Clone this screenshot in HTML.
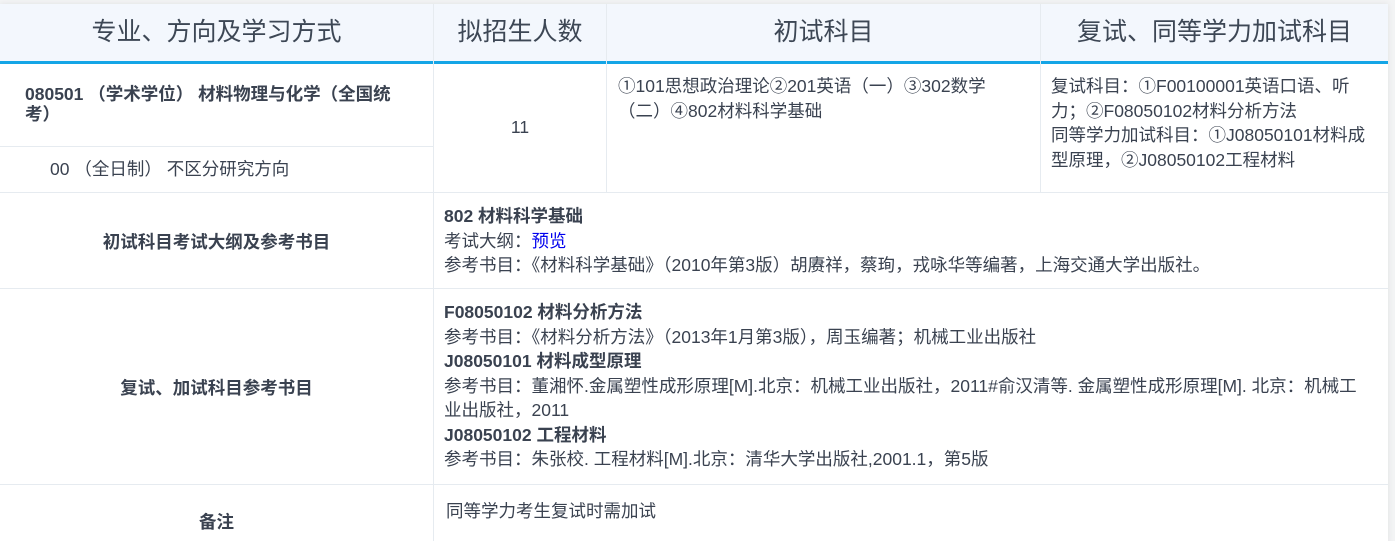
<!DOCTYPE html>
<html><head><meta charset="utf-8"><style>
*{margin:0;padding:0;box-sizing:border-box}
html,body{width:1395px;height:541px;overflow:hidden}
body{background:#f3f4f5;font-family:"Liberation Sans","Noto Sans CJK SC",sans-serif;color:#3a4250;position:relative}
.t{position:absolute;left:0;top:4px;width:1388px;height:540px;background:#fff;box-shadow:0 0 6px rgba(0,0,0,.08)}
.a{position:absolute}
.hd{position:absolute;top:0;height:57px;background:#f3f7fd;font-size:25px;line-height:57px;text-align:center;color:#3d4755}
.vl{position:absolute;width:1px;background:#e6ebf0}
.hl{position:absolute;height:1px;background:#e6ebf0}
.txt{font-size:17.5px;line-height:24.5px}
b{font-weight:bold}
</style></head><body>
<div class="t">
<div class="hd" style="left:0;width:433px">专业、方向及学习方式</div>
<div class="hd" style="left:434px;width:172px">拟招生人数</div>
<div class="hd" style="left:607px;width:433px">初试科目</div>
<div class="hd" style="left:1041px;width:347px">复试、同等学力加试科目</div>
<div class="a" style="left:0;top:57px;width:1388px;height:3px;background:#14a5e6"></div>
<div class="vl" style="left:433px;top:0;height:560px"></div>
<div class="vl" style="left:606px;top:0;height:188px"></div>
<div class="vl" style="left:1040px;top:0;height:188px"></div>
<div class="hl" style="left:0;top:142px;width:433px"></div>
<div class="hl" style="left:0;top:188px;width:1388px"></div>
<div class="hl" style="left:0;top:284px;width:1388px"></div>
<div class="hl" style="left:0;top:480px;width:1388px"></div>
<div class="a txt" style="left:25px;top:80px;width:385px;line-height:20px;font-weight:bold;font-size:17.5px">080501 （学术学位） 材料物理与化学（全国统考）</div>
<div class="a txt" style="left:50px;top:153px">00 （全日制） 不区分研究方向</div>
<div class="a txt" style="left:434px;top:111px;width:172px;text-align:center">11</div>
<div class="a txt" style="left:618px;top:70px;width:400px">①101思想政治理论②201英语（一）③302数学（二）④802材料科学基础</div>
<div class="a txt" style="left:1051px;top:70px;width:325px">复试科目：①F00100001英语口语、听力；②F08050102材料分析方法<br>同等学力加试科目：①J08050101材料成型原理，②J08050102工程材料</div>
<div class="a txt" style="left:0;top:226px;width:433px;text-align:center;font-weight:bold">初试科目考试大纲及参考书目</div>
<div class="a txt" style="left:444px;top:200px"><b>802 材料科学基础</b><br>考试大纲：<span style="color:#0000ee">预览</span><br>参考书目：《材料科学基础》（2010年第3版）胡赓祥，蔡珣，戎咏华等编著，上海交通大学出版社。</div>
<div class="a txt" style="left:0;top:372px;width:433px;text-align:center;font-weight:bold">复试、加试科目参考书目</div>
<div class="a txt" style="left:444px;top:296px;width:930px"><b>F08050102 材料分析方法</b><br>参考书目：《材料分析方法》（2013年1月第3版），周玉编著；机械工业出版社<br><b>J08050101 材料成型原理</b><br>参考书目：董湘怀.金属塑性成形原理[M].北京：机械工业出版社，2011#俞汉清等. 金属塑性成形原理[M]. 北京：机械工业出版社，2011<br><b>J08050102 工程材料</b><br>参考书目：朱张校. 工程材料[M].北京：清华大学出版社,2001.1，第5版</div>
<div class="a txt" style="left:0;top:506px;width:433px;text-align:center;font-weight:bold">备注</div>
<div class="a txt" style="left:446px;top:495px">同等学力考生复试时需加试</div>
</div>
</body></html>
